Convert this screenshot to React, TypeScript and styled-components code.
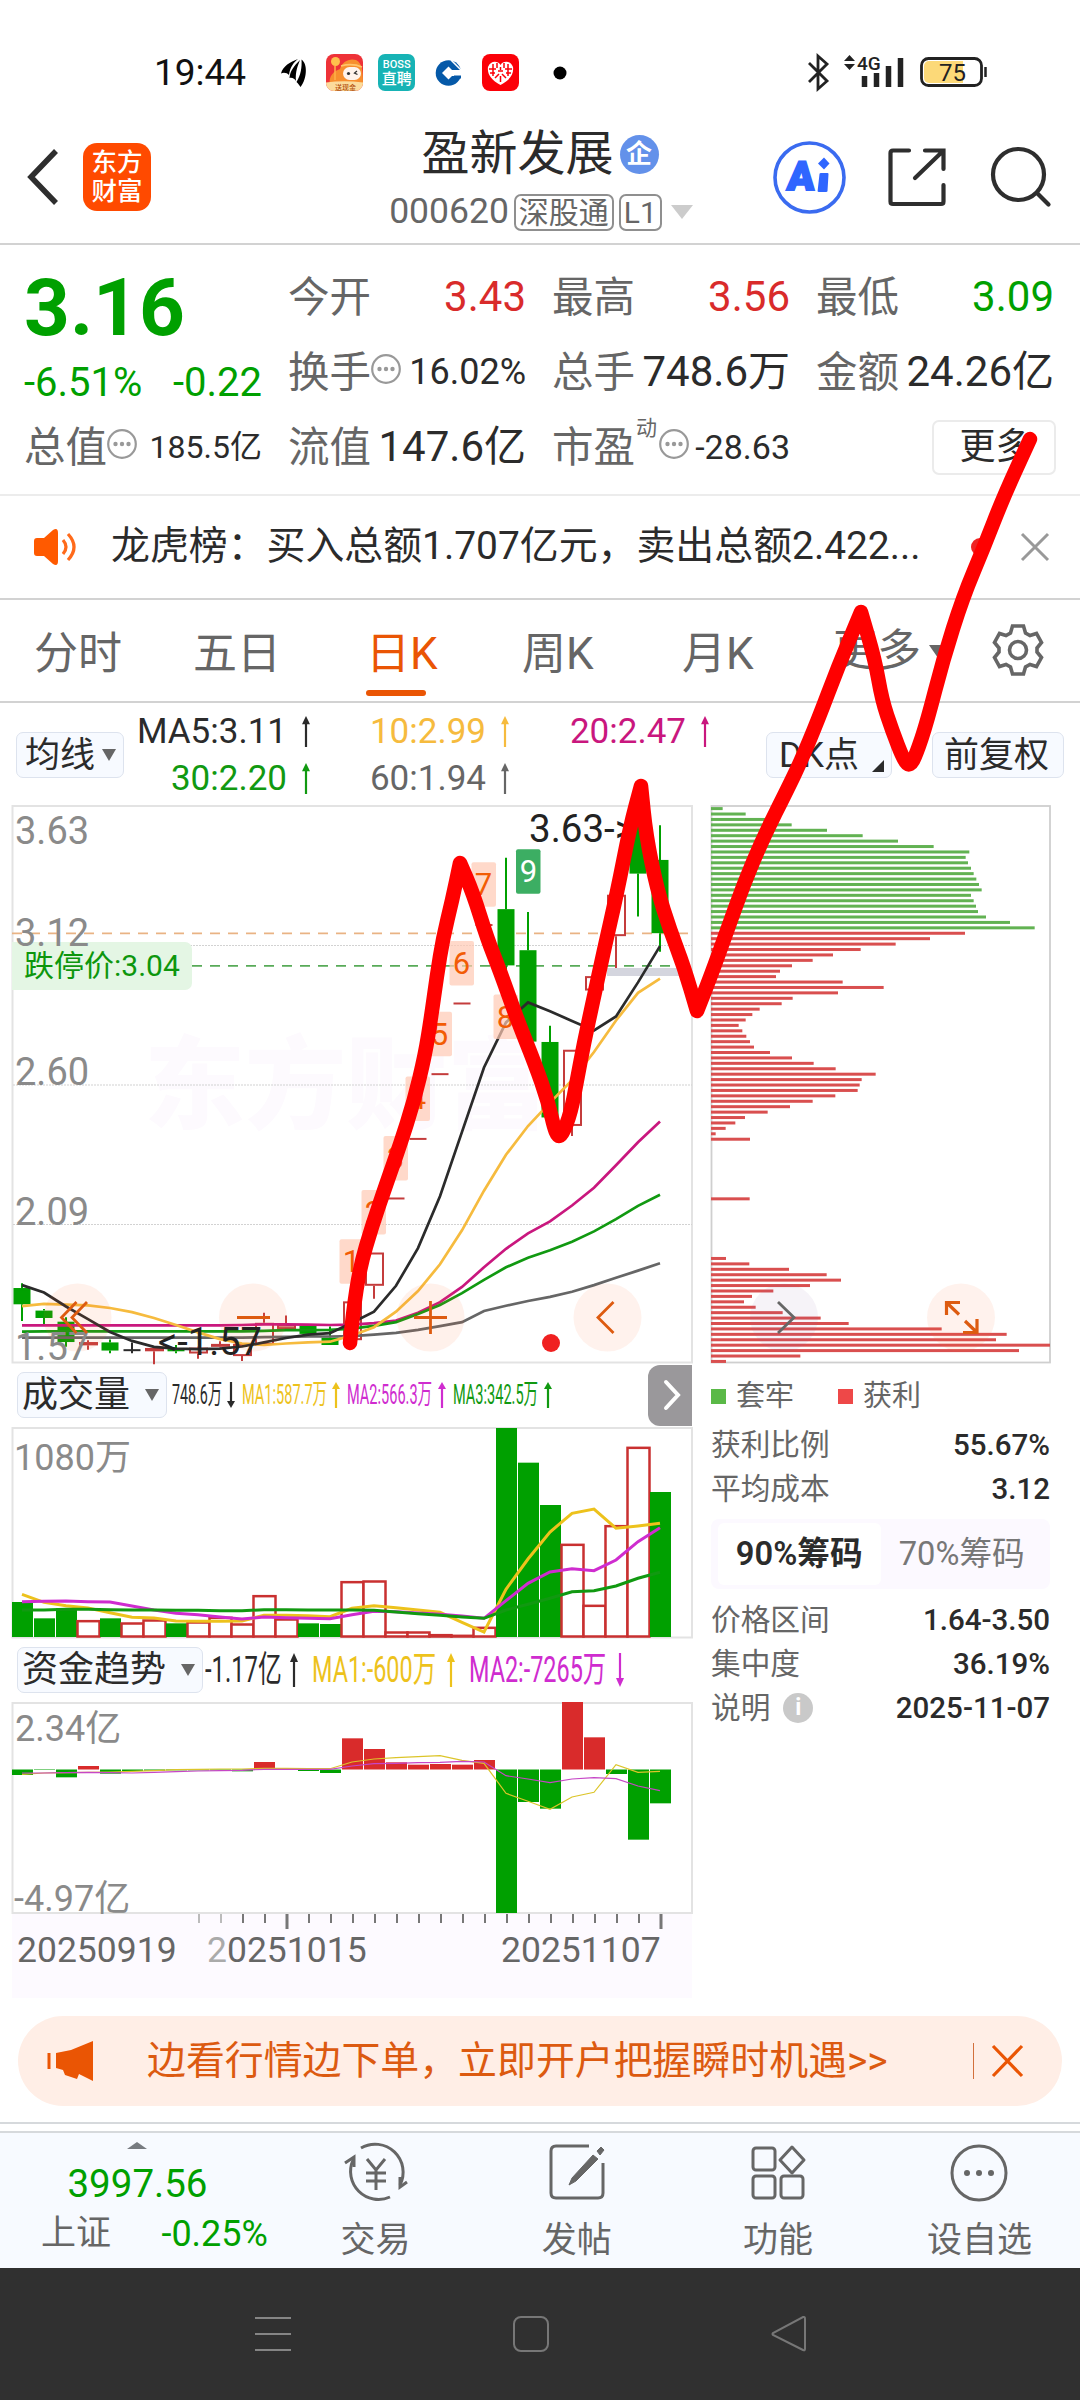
import React from 'react'
import styled, { createGlobalStyle } from 'styled-components'

const GREEN = '#00a000'
const RED = '#d92b2b'
const ORANGE = '#ea5504'

const GlobalStyle = createGlobalStyle`
  * {
    box-sizing: border-box;
  }

  body {
    margin: 0;
    background: #fff;
    font-family: Roboto, 'Noto Sans CJK SC', sans-serif;
    color: #2b2b2b;
  }
`

const Screen = styled.div`
  position: relative;
  display: flex;
  flex-direction: column;
  width: 1080px;
  height: 2400px;
  overflow: hidden;
  background: #fff;
`

/* ---------- shared ---------- */

interface TextProps {
  $size?: number
  $color?: string
  $weight?: number
}

const Text = styled.span<TextProps>`
  font-size: ${({ $size }) => $size || 36}px;
  line-height: ${({ $size }) => $size || 36}px;
  color: ${({ $color }) => $color || '#2b2b2b'};
  font-weight: ${({ $weight }) => $weight || 400};
  white-space: nowrap;
`

const Spacer = styled.div`
  flex: 1;
`

const Svg = styled.svg`
  display: block;
  flex: none;
  overflow: visible;
`

interface ArrowProps {
  color: string
  down?: boolean
  height?: number
}

const Arrow: React.FC<ArrowProps> = ({ color, down, height = 31 }) => (
  <Svg width="10" height={height} viewBox="0 0 10 30" preserveAspectRatio="none">
    <g transform={down ? 'rotate(180 5 15)' : undefined}>
      <path d="M5 3V30" stroke={color} strokeWidth="2.2" />
      <path d="M5 0L9 8H1Z" fill={color} />
    </g>
  </Svg>
)

/* ---------- status bar ---------- */

const StatusBar = styled.div`
  display: flex;
  align-items: center;
  height: 92px;
  padding: 53px 91px 0 154px;
`

const StatusGroup = styled.div`
  display: flex;
  align-items: center;
  height: 39px;
`

const AppIcons = styled(StatusGroup)`
  gap: 15px;
  margin-left: 35px;
`

const BossIcon = styled.div`
  display: flex;
  flex-direction: column;
  align-items: center;
  justify-content: center;
  width: 37px;
  height: 37px;
  border-radius: 7px;
  background: #17b3b5;
  color: #fff;
  font-weight: 500;
`

const BossLatin = styled.span`
  font-size: 11px;
  line-height: 12px;
`

const BossHan = styled.span`
  font-size: 15px;
  line-height: 16px;
`

const PromoIcon = () => (
  <Svg width="37" height="37" viewBox="0 0 37 37">
    <rect width="37" height="37" rx="8" fill="#ee3238" />
    <path d="M4 31C2 22 8 17 14 15C16 8 23 4 30 6c7 3 7 14 7 25z" fill="#f78f2e" />
    <path d="M15 12Q26 9 36 13" stroke="#ffc46b" strokeWidth="1.8" fill="none" />
    <circle cx="9.5" cy="7.500" r="4.500" fill="#ffc04d" />
    <path d="M9 12V26" stroke="#ffb04a" strokeWidth="1.5" />
    <rect x="17" y="13" width="18" height="13" rx="6.500" fill="#fff3ec" />
    <circle cx="22.500" cy="19.500" r="1.600" fill="#333" />
    <path d="M31 17l-2.500 2 3 1.500" stroke="#333" strokeWidth="1.300" fill="none" />
    <path d="M0 28.500Q18 26 37 28.500V29a8 8 0 0 1-8 8H8a8 8 0 0 1-8-8z" fill="#fbdc9c" />
    <text x="9" y="35.500" fontSize="7" fontWeight="500" fill="#b4520f">
      送现金
    </text>
  </Svg>
)

const WingIcon = () => (
  <Svg width="30" height="30" viewBox="0 0 30 30">
    <path d="M17 1C9 4 2 8 0 15.500C3 14 6 15 8 17C9 9 13 4 17 1z" fill="#000" />
    <path d="M19 2C13 8 9 13 8.500 20C11 19 14 21 15 23C14 14 17 7 19 2z" fill="#000" />
    <path d="M20.500 1.500C27 6 26 21 19.500 29C18 27 17 25 15.500 24C20 17 21 9 20.500 1.500z" fill="#000" />
  </Svg>
)

const BankIcon = () => (
  <Svg width="37" height="30" viewBox="0 0 37 30">
    <circle cx="18.500" cy="15" r="12.800" fill="#0559a8" />
    <path d="M18.500 8.500L25 15L18.500 21.500L12 15Z" fill="#fff" />
    <path d="M22 12H33V18H22Z" fill="#fff" />
    <path d="M21 2L31 12" stroke="#fff" strokeWidth="1.600" />
    <path d="M24 19H31" stroke="#0559a8" strokeWidth="3" />
  </Svg>
)

const HeartIcon = () => (
  <Svg width="37" height="37" viewBox="0 0 37 37">
    <rect width="37" height="37" rx="8" fill="#fb0008" />
    <path
      d="M18.500 31C9 26 5 20 6 13C9 6 16 7 18.500 11C21 7 28 6 31 13C32 20 28 26 18.500 31Z"
      fill="#fff"
    />
    <path
      d="M11 10V22M15 9V14M22 9V14M26 10V22M7 15H14M23 15H30M8 19H13M24 19H29M16 17H21M18.500 13V16M13 24L17 20M24 24L20 20M18.500 22V28"
      fill="none"
      stroke="#fb0008"
      strokeWidth="1.500"
    />
  </Svg>
)

const SystemIcons = () => (
  <Svg width="184" height="38" viewBox="806 54 184 38">
    <path
      d="M810 63l18 18-9 8V56l9 8-18 18"
      fill="none"
      stroke="#222"
      strokeWidth="2.800"
    />
    <path d="M850.500 55l5.500 6h-11zM850.500 70l5.500-6h-11z" fill="#222" />
    <text x="858" y="70" fontSize="19" fontWeight="500" fill="#222">
      4G
    </text>
    <path
      d="M865.500 76v11M877.500 73v14M889.500 66v21M901.500 58v29"
      stroke="#222"
      strokeWidth="5.500"
      strokeLinecap="butt"
    />
    <rect x="922.500" y="58.500" width="60" height="27" rx="7" fill="#fff" stroke="#222" strokeWidth="2.800" />
    <path d="M925 66a5 5 0 0 1 5-5h34v22h-34a5 5 0 0 1-5-5z" fill="#fcd978" />
    <path d="M986.500 67v10" stroke="#222" strokeWidth="2.500" />
    <text x="940" y="80.500" fontSize="24" fill="#222">
      75
    </text>
  </Svg>
)

/* ---------- header ---------- */

const Header = styled.div`
  display: grid;
  grid-template-columns: 330px 1fr 330px;
  height: 153px;
  padding-top: 33px;
  border-bottom: 2px solid #d2d2d2;
`

const HeaderSide = styled.div`
  display: flex;
  align-items: center;
  height: 104px;
  padding-left: 26px;
`

const HeaderActions = styled(HeaderSide)`
  justify-content: flex-end;
  padding: 0 28px 0 0;
  gap: 41px;
`

const BrandLogo = styled.div`
  width: 68px;
  height: 68px;
  margin-left: 24px;
  padding-top: 5px;
  border-radius: 14px;
  background: #ff4a00;
  color: #fff;
  font-size: 25.500px;
  font-weight: 500;
  line-height: 28.500px;
  text-align: center;
`

const TitleBlock = styled.div`
  display: flex;
  flex-direction: column;
  align-items: center;
`

const TitleRow = styled.div`
  display: flex;
  align-items: center;
  gap: 6px;
  height: 58px;
`

const CompanyBadge = styled.div`
  width: 39px;
  height: 39px;
  border-radius: 50%;
  background: #6391ea;
  color: #fff;
  font-size: 26px;
  font-weight: 700;
  line-height: 38px;
  text-align: center;
`

const CodeRow = styled.div`
  display: flex;
  align-items: center;
  gap: 5px;
  height: 58px;
  padding-left: 4px;
`

const Tag = styled.span`
  height: 37px;
  padding: 0 3px;
  border: 2px solid #8f8f8f;
  border-radius: 7px;
  font-size: 30px;
  line-height: 33px;
  color: #666;
`

const AiIcon = () => (
  <Svg width="73" height="73" viewBox="0 0 73 73">
    <circle cx="36.500" cy="36.500" r="34.500" fill="#fff" stroke="#3a6bf0" strokeWidth="3.600" />
    <text
      x="17"
      y="49.500"
      fontSize="40"
      fontWeight="900"
      fill="#2f66ff"
      stroke="#2f66ff"
      strokeWidth="2"
      transform="skewX(-4)"
    >
      A
    </text>
    <path d="M46.500 33Q46.500 32 48 32H54.500Q55.500 32 55.500 33L54.500 50Q54.500 51 53 51H46Q44.500 51 44.600 50Z" fill="#2f66ff" />
    <path d="M51 16.500L56.500 22.500L51 28.500L45 22.500Z" fill="#2f66ff" />
  </Svg>
)

const ShareIcon = () => (
  <Svg width="62" height="60" viewBox="0 0 62 60">
    <path
      d="M22 3.500H6Q3.500 3.500 3.500 6V54.500Q3.500 57 6 57H54Q56.500 57 56.500 54.500V38M28 31L55 5M38 3.500H56.500V22"
      fill="none"
      stroke="#2e2e2e"
      strokeWidth="4.200"
      strokeLinecap="round"
    />
  </Svg>
)

const SearchIcon = () => (
  <Svg width="62" height="62" viewBox="0 0 62 62">
    <circle cx="28.500" cy="28.500" r="25.500" fill="none" stroke="#2e2e2e" strokeWidth="4.200" />
    <path d="M47 47L58.500 58.500" stroke="#2e2e2e" strokeWidth="4.200" strokeLinecap="round" />
  </Svg>
)

/* ---------- quote ---------- */

const Quote = styled.div`
  display: grid;
  grid-template-columns: repeat(4, 238px);
  grid-template-rows: repeat(3, 75px);
  column-gap: 26px;
  height: 249px;
  padding: 15px 25px 0 24px;
`

const PriceCell = styled.div`
  grid-row: span 2;
  display: flex;
  flex-direction: column;
  padding-top: 8px;
`

const ChangeRow = styled.div`
  display: flex;
  justify-content: space-between;
  margin-top: 15px;
`

const QuoteCell = styled.div`
  display: flex;
  align-items: center;
`

const MoreCell = styled(QuoteCell)`
  justify-content: flex-end;
`

const MoreButton = styled.div`
  width: 124px;
  height: 55px;
  margin-right: -2px;
  padding-left: 3px;
  border: 2px solid #ebebeb;
  border-radius: 7px;
  font-size: 36px;
  line-height: 50px;
  text-align: center;
`

const Sup = styled.span`
  align-self: flex-start;
  margin: 4px 2px 0 1px;
  font-size: 21px;
  line-height: 28px;
  color: #666;
`

const Dots = () => (
  <Svg width="30" height="36" viewBox="0 0 30 36">
    <circle cx="15" cy="15" r="13.800" fill="none" stroke="#999" strokeWidth="2.200" />
    <g fill="#999">
      <circle cx="8.500" cy="15" r="2.200" />
      <circle cx="15" cy="15" r="2.200" />
      <circle cx="21.500" cy="15" r="2.200" />
    </g>
  </Svg>
)

interface QuoteItemProps {
  label: string
  value: string
  color?: string
  size?: number
  info?: boolean
  sup?: string
}

const QuoteItem: React.FC<QuoteItemProps> = ({ label, value, color, size = 42, info, sup }) => (
  <QuoteCell>
    <Text $size={41.5} $color="#666">
      {label}
    </Text>
    {sup ? <Sup>{sup}</Sup> : null}
    {info ? <Dots /> : null}
    <Spacer />
    <Text $size={size} $color={color}>
      {value}
    </Text>
  </QuoteCell>
)

/* ---------- notice + tabs ---------- */

const Notice = styled.div`
  display: flex;
  align-items: center;
  height: 106px;
  padding: 0 30px 0 34px;
  border-top: 2px solid #ececec;
  border-bottom: 2px solid #d2d2d2;
`

const NoticeText = styled(Text)`
  margin-left: 32px;
`

const Dot = styled.div`
  width: 18px;
  height: 18px;
  margin-right: 31px;
  border-radius: 50%;
  background: #ee2222;
`

const Tabs = styled.div`
  display: flex;
  align-items: center;
  height: 104px;
  padding: 0 37px 0 34px;
  border-bottom: 2px solid #d2d2d2;
`

interface TabProps {
  $width: number
  $active?: boolean
}

const Tab = styled.div<TabProps>`
  display: flex;
  flex-direction: column;
  width: ${({ $width }) => $width}px;
  height: 100%;
  padding-top: 32px;
  font-size: 44px;
  line-height: 44px;
  color: ${({ $active }) => ($active ? ORANGE : '#666')};

  &:after {
    content: '';
    width: 60px;
    height: 6px;
    margin-top: 14px;
    border-radius: 3px;
    background: ${({ $active }) => ($active ? ORANGE : 'transparent')};
  }
`

const MoreTab = styled.div`
  display: flex;
  align-items: center;
  gap: 8px;
  padding-top: 2px;
  font-size: 44px;
  line-height: 44px;
  color: #666;
`

/* ---------- chart tools ---------- */

const Tools = styled.div`
  display: flex;
  align-items: center;
  height: 102px;
  padding: 2px 16px 0;
`

const Chip = styled.div<{ $width: number; $pad?: number }>`
  display: flex;
  align-items: center;
  justify-content: space-between;
  width: ${({ $width }) => $width}px;
  height: 46px;
  padding: 0 7px 0 ${({ $pad }) => $pad || 4}px;
  border: 1px solid #dde3ee;
  border-radius: 7px;
  background: #f7faff;
  flex: none;
`

const Averages = styled.div`
  display: grid;
  grid-template-columns: 187px 199px 200px;
  grid-template-rows: 47px 47px;
  justify-items: end;
`

const AverageItem = styled.div`
  display: flex;
  align-items: center;
  gap: 14px;
`

const ToolButtons = styled.div`
  display: flex;
  gap: 40px;
`

const Caret = styled.div<{ $w?: number; $h?: number; $color?: string }>`
  border-left: ${({ $w }) => $w || 7.5}px solid transparent;
  border-right: ${({ $w }) => $w || 7.5}px solid transparent;
  border-top: ${({ $h }) => $h || 12}px solid ${({ $color }) => $color || '#666'};
`

const CaretUp = styled.div`
  border-left: 10px solid transparent;
  border-right: 10px solid transparent;
  border-bottom: 7px solid #777b80;
`

const Corner = styled.div`
  align-self: flex-end;
  margin-bottom: 5px;
  border-left: 12px solid transparent;
  border-bottom: 12px solid #2b2b2b;
`

/* ---------- charts ---------- */

const Body = styled.div`
  display: flex;
  height: 1193px;
  padding-left: 12px;
`

const ChartColumn = styled.div`
  width: 680px;
`

const ChipColumn = styled.div`
  width: 339px;
  margin-left: 19px;
`

const IndicatorRow = styled.div`
  display: flex;
  align-items: center;
  height: 64px;
  padding-left: 5px;
`

const Readings = styled.div<{ $gap: number; $left: number }>`
  display: flex;
  align-items: center;
  gap: ${({ $gap }) => $gap}px;
  margin-left: ${({ $left }) => $left}px;
`

const Reading = styled.div<{ $width: number }>`
  display: flex;
  align-items: center;
  justify-content: space-between;
  width: ${({ $width }) => $width}px;
`

const Narrow = styled(Text)<{ $scale: number; $room: number }>`
  width: ${({ $room }) => $room}px;
  transform: scaleX(${({ $scale }) => $scale});
  transform-origin: 0 50%;
`

const NextButton = styled.div`
  display: flex;
  align-items: center;
  justify-content: center;
  width: 44px;
  height: 61px;
  padding-left: 4px;
  border-radius: 12px 0 0 12px;
  background: #9a989b;
`

const Axis = styled.div`
  height: 84px;
  background: #fdfaff;
`

const center = (i: number) => 10 + i * 22
const toPoints = (values: number[], y: (v: number) => number) =>
  values.map((v, i) => `${center(i)},${y(v).toFixed(1)}`).join(' ')

// [kind, body top, body bottom, wick top, wick bottom]
type Candle = ['g' | 'r' | 'k', number, number, number, number]

const candles: Candle[] = [
  ['g', 1346, 1390, 1333, 1435],
  ['g', 1407, 1427, 1403, 1445],
  ['g', 1437, 1492, 1425, 1505],
  ['r', 1492, 1501, 1487, 1513],
  ['g', 1493, 1515, 1485, 1522],
  ['k', 1514, 1516, 1493, 1522],
  ['r', 1508, 1517, 1508, 1552],
  ['g', 1511, 1517, 1500, 1522],
  ['r', 1507, 1523, 1505, 1537],
  ['r', 1497, 1505, 1490, 1507],
  ['r', 1497, 1530, 1497, 1543],
  ['r', 1440, 1500, 1413, 1500],
  ['r', 1445, 1457, 1420, 1457],
  ['g', 1447, 1470, 1447, 1470],
  ['g', 1480, 1500, 1450, 1500],
  ['r', 1382, 1487, 1382, 1487],
  ['r', 1250, 1340, 1250, 1375],
  ['r', 1104, 1104, 1104, 1104],
  ['r', 943, 943, 943, 943],
  ['r', 768, 768, 768, 768],
  ['r', 577, 577, 577, 577],
  ['r', 365, 365, 365, 365],
  ['g', 322, 474, 183, 503],
  ['g', 433, 680, 330, 695],
  ['g', 681, 885, 637, 885],
  ['r', 702, 908, 702, 935],
  ['r', 503, 542, 503, 542],
  ['r', 283, 395, 283, 481],
  ['g', 80, 226, 60, 342],
  ['g', 189, 387, 95, 437],
]

const priceLines: [string, number[]][] = [
  ['#666', [1480, 1480, 1480, 1480, 1480, 1480, 1480, 1480, 1480, 1480, 1480, 1479, 1478, 1477, 1477, 1476, 1472, 1467, 1459, 1449, 1438, 1408, 1394, 1381, 1370, 1356, 1338, 1318, 1299, 1279]],
  ['#c9177e', [1447, 1447, 1447, 1447, 1447, 1447, 1447, 1447, 1447, 1447, 1446, 1444, 1444, 1445, 1446, 1445, 1441, 1434, 1413, 1384, 1343, 1290, 1240, 1198, 1166, 1123, 1075, 1014, 952, 896]],
  ['#119911', [1464, 1463, 1463, 1463, 1463, 1463, 1463, 1463, 1463, 1463, 1463, 1462, 1460, 1460, 1459, 1456, 1448, 1438, 1416, 1392, 1360, 1324, 1290, 1264, 1244, 1221, 1193, 1160, 1124, 1094]],
  ['#f6bb3e', [1395, 1389, 1391, 1393, 1400, 1411, 1427, 1446, 1466, 1484, 1496, 1500, 1496, 1493, 1491, 1474, 1452, 1410, 1354, 1282, 1190, 1083, 986, 908, 845, 784, 708, 623, 548, 510]],
  ['#2b2b2b', [1338, 1358, 1396, 1430, 1465, 1489, 1505, 1510, 1511, 1510, 1504, 1493, 1481, 1472, 1468, 1440, 1410, 1340, 1238, 1098, 924, 750, 628, 574, 598, 624, 650, 612, 520, 422]],
]

const badges: [string, number, number][] = [
  ['1', 328, 1214],
  ['2', 350, 1081],
  ['3', 372, 935],
  ['4', 394, 774],
  ['5', 416, 599],
  ['6', 438, 408],
  ['7', 460, 195],
  ['8', 482, 553],
]

const py = (v: number) => v * 0.37 - 15

const PriceChart = () => (
  <Svg width="681" height="558" viewBox="0 0 681 558">
    <text x="132" y="316" fontSize="101" fontWeight="900" fill="#fdfafe">
      东方财富
    </text>
    <rect x="0.500" y="1" width="679.500" height="556.500" fill="none" stroke="#e3e3e3" strokeWidth="2" />
    <path d="M1 140.500H680M1 280H680M1 419.500H680" stroke="#d2d2d2" strokeWidth="1.200" strokeDasharray="2 1" />
    <path d="M0 128.300H676" stroke="#e9b384" strokeWidth="1.800" strokeDasharray="10 8" />
    <path d="M180 160.800H676" stroke="#58aa58" strokeWidth="1.800" strokeDasharray="10 8" />
    <rect x="595" y="163" width="85" height="8" fill="#d4d5de" />
    <path d="M0 137H173a7 7 0 0 1 7 7V178a7 7 0 0 1-7 7H0Z" fill="#e4f6e4" />
    <g fontSize="38" fill="#8a8a8a">
      <text x="3" y="39">3.63</text>
      <text x="3" y="140.500">3.12</text>
      <text x="3" y="280">2.60</text>
      <text x="3" y="420">2.09</text>
    </g>
    <text x="12" y="171" fontSize="30" fill="#0d960d">
      跌停价:3.04
    </text>
    {candles.map(([kind, top, bottom, high, low], i) => {
      const x = center(i)
      const color = kind === 'g' ? GREEN : kind === 'r' ? '#c43c3c' : '#2b2b2b'
      const flat = bottom - top < 4
      return (
        <g key={i} stroke={color} strokeWidth="2">
          <path d={`M${x} ${py(high)}V${py(top)}M${x} ${py(bottom)}V${py(low)}`} />
          {flat ? (
            <path d={`M${x - 8.5} ${py(top)}H${x + 8.5}`} />
          ) : (
            <rect
              x={x - (kind === 'g' ? 7.5 : 8)}
              y={py(top) + 1}
              width={kind === 'g' ? 15 : 17}
              height={py(bottom) - py(top) - 2}
              fill={kind === 'g' ? GREEN : '#fff'}
            />
          )}
        </g>
      )
    })}
    {priceLines.map(([color, values]) => (
      <polyline key={color} points={toPoints(values, py)} fill="none" stroke={color} strokeWidth="2.700" />
    ))}
    {badges.map(([label, x, top]) => (
      <g key={label}>
        <rect x={x - 0.5} y={py(top)} width="24.500" height="44.500" rx="2" fill="#ffc9b3" opacity="0.700" />
        <text x={x + 11.5} y={py(top) + 33} fontSize="31" textAnchor="middle" fill="#f25c05">
          {label}
        </text>
      </g>
    ))}
    <rect x="504" y={py(160)} width="24.500" height="44.500" rx="2" fill="#3cae63" />
    <text x="516.500" y={py(160) + 33} fontSize="31" textAnchor="middle" fill="#fff">
      9
    </text>
    <text x="517" y="36.500" fontSize="38.500" fill="#222">
      3.63-&gt;
    </text>
    <g fill="#ff6a33" opacity="0.090">
      <circle cx="65.500" cy="512.500" r="34" />
      <circle cx="241" cy="512.500" r="34" />
      <circle cx="418.500" cy="512.500" r="34" />
      <circle cx="595.500" cy="512.500" r="34" />
    </g>
    <text x="3" y="555" fontSize="38" fill="#8a8a8a">
      1.57
    </text>
    <text x="146" y="549.500" fontSize="38" fill="#222">
      &lt;-1.57
    </text>
    <path
      d="M64.500 497L49.500 512.500L64.500 528M75 497L60 512.500L75 528M225 512.500H258M402 512.500H435M418.500 496V529M601.500 497L586 512.500L601.500 528"
      fill="none"
      stroke="#dd5b10"
      strokeWidth="2.800"
    />
    <circle cx="539" cy="538" r="9" fill="#f02020" />
  </Svg>
)

const volumes: [string, number][] = [
  ['g', 726], ['g', 775], ['g', 745], ['r', 782], ['g', 775], ['r', 789],
  ['r', 780], ['g', 790], ['r', 786], ['r', 772], ['r', 792], ['r', 707],
  ['r', 777], ['g', 790], ['g', 792], ['r', 665], ['r', 663], ['r', 816],
  ['r', 816], ['r', 824], ['r', 826], ['r', 802], ['g', 204], ['g', 308],
  ['g', 435], ['r', 553], ['r', 736], ['r', 497], ['r', 262], ['g', 396],
]

const volumeLines: [string, number[]][] = [
  ['#edc21c', [703, 727, 737, 744, 758, 772, 774, 783, 784, 784, 783, 766, 766, 767, 770, 745, 737, 743, 750, 757, 787, 816, 688, 597, 516, 460, 447, 505, 498, 490]],
  ['#cf2ccf', [725, 724, 723, 725, 726, 738, 750, 760, 764, 771, 777, 771, 773, 775, 776, 764, 754, 755, 759, 763, 768, 775, 722, 670, 636, 626, 632, 600, 545, 503]],
  ['#119911', [750, 750, 748, 748, 749, 750, 750, 751, 751, 752, 752, 749, 749, 750, 750, 750, 751, 756, 761, 766, 771, 775, 750, 733, 715, 695, 692, 678, 655, 637]],
]

const vy = (v: number) => v / 3 - 67

const VolumeChart = () => (
  <Svg width="681" height="211" viewBox="0 0 681 211">
    <rect x="0.500" y="1" width="679.500" height="209.500" fill="none" stroke="#e3e3e3" strokeWidth="2" />
    <text x="2" y="43" fontSize="36" fill="#8a8a8a">
      1080万
    </text>
    {volumes.map(([kind, top], i) =>
      kind === 'g' ? (
        <rect key={i} x={i * 22} y={vy(top)} width="21" height={210 - vy(top)} fill={GREEN} />
      ) : (
        <rect
          key={i}
          x={i * 22 - 0.5}
          y={vy(top) + 0.5}
          width="22"
          height={209 - vy(top)}
          fill="#fff"
          stroke="#c93030"
          strokeWidth="2.500"
        />
      )
    )}
    {volumeLines.map(([color, values]) => (
      <polyline key={color} points={toPoints(values, vy)} fill="none" stroke={color} strokeWidth="3" />
    ))}
  </Svg>
)

const flows = [
  405, 390, 412, 378, 401, 393, 392, 391, 391, 391, 394, 366, 386, 393, 399,
  295, 327, 367, 374, 372, 374, 360, 819, 486, 506, 186, 292, 402, 599, 490,
]

const flowLines: [string, number[]][] = [
  ['#dcc52a', [403, 399, 398, 397, 396, 394, 392, 389, 388, 387, 387, 385, 385, 386, 386, 366, 357, 353, 350, 347, 361, 370, 460, 484, 508, 471, 457, 374, 397, 394]],
  ['#c646c6', [399, 399, 398, 397, 398, 399, 397, 395, 393, 392, 391, 388, 388, 388, 388, 378, 371, 370, 368, 367, 364, 366, 407, 417, 428, 417, 413, 416, 438, 452]],
]

const fy = (v: number) => v / 3 - 62
const FLOW_ZERO = 388.5

const FlowChart = () => (
  <Svg width="681" height="212" viewBox="0 0 681 212">
    <rect x="0.500" y="1" width="679.500" height="210" fill="none" stroke="#e3e3e3" strokeWidth="2" />
    <text x="3" y="39" fontSize="36" fill="#8a8a8a">
      2.34亿
    </text>
    <text x="2" y="209" fontSize="36" fill="#8a8a8a">
      -4.97亿
    </text>
    {flows.map((v, i) => (
      <rect
        key={i}
        x={i * 22}
        y={fy(Math.min(v, FLOW_ZERO))}
        width="21"
        height={Math.abs(v - FLOW_ZERO) / 3}
        fill={v < FLOW_ZERO ? RED : GREEN}
      />
    ))}
    {flowLines.map(([color, values]) => (
      <polyline key={color} points={toPoints(values, fy)} fill="none" stroke={color} strokeWidth="1.200" />
    ))}
  </Svg>
)

const ticks = Array.from({ length: 22 }, (_, i) => 187 + i * 22)

const TimeAxis = () => (
  <Axis>
    <Svg width="680" height="84" viewBox="0 0 680 84">
      {ticks.map((x, i) => {
        const major = i === 4 || i === 21
        return (
          <path
            key={x}
            d={`M${x} 0V${major ? 15 : 9}`}
            stroke={i < 2 ? '#bbb' : '#777'}
            strokeWidth={major ? 3 : 2}
          />
        )
      })}
      <g fontSize="35.500" fill="#666">
        <text x="5" y="48">20250919</text>
        <text x="195" y="48">
          <tspan fill="#aaa">2</tspan>0251015
        </text>
        <text x="489" y="48">20251107</text>
      </g>
    </Svg>
  </Axis>
)

/* ---------- holdings distribution ---------- */

const chipWidths: number[] = [
  98, 167, 240, 305, 411, 518, 624, 731, 838, 827, 834, 843, 851, 859, 867,
  875, 843, 851, 858, 864, 888, 960, 1034, 825, 720, 617, 512, 429, 368, 306,
  270, 258, 458, 581, 444, 308, 275, 209, 187, 167, 146, 157, 169, 180, 192,
  240, 306, 371, 437, 557, 515, 509, 503, 436, 368, 300, 233, 165, 136, 107,
  77, 180, 0, 0, 0, 0, 0, 0, 0, 0, 0, 0, 179, 0, 0, 0, 0, 0, 0, 0, 0, 0, 0,
  108, 178, 297, 410, 453, 360, 250, 186, 162, 197, 278, 392, 476, 755, 950,
  918, 1080, 987, 331, 108,
]

const ChipChart = () => (
  <Svg width="340" height="558" viewBox="0 0 340 558">
    <rect x="0.500" y="1" width="338.500" height="556.500" fill="none" stroke="#cfcfcf" strokeWidth="1.800" />
    {chipWidths.map((w, i) =>
      w ? (
        <rect
          key={i}
          x="0"
          y={2.1 + i * 5.42}
          width={(w - 63) / 3}
          height="3"
          fill={i < 23 ? '#62b252' : '#d94f4f'}
        />
      ) : null
    )}
    <circle cx="73" cy="512.500" r="34" fill="#8a60a8" opacity="0.080" />
    <circle cx="250" cy="512.500" r="34" fill="#ff6a33" opacity="0.090" />
    <path d="M67 497L83 512.500L67 528" fill="none" stroke="#666" strokeWidth="2.800" />
    <path
      d="M235.500 510V497.500H249M235.500 497.500L248 509.500M254 516L266 527.500M252 527.500H266V514"
      fill="none"
      stroke="#dd5b10"
      strokeWidth="3.200"
    />
  </Svg>
)

const Legend = styled.div`
  display: flex;
  align-items: center;
  height: 60px;
  padding-top: 6px;
`

const Square = styled.div<{ $color: string }>`
  width: 15px;
  height: 15px;
  margin-right: 10px;
  background: ${({ $color }) => $color};
`

const LegendGap = styled.div`
  width: 44px;
`

const StatRow = styled.div`
  display: flex;
  align-items: center;
  height: 44px;
`

const InfoMark = styled.div`
  width: 30px;
  height: 30px;
  margin-left: 13px;
  border-radius: 50%;
  background: #c9c9c9;
  color: #fff;
  font-size: 23px;
  font-weight: 700;
  line-height: 30px;
  text-align: center;
`

const Toggle = styled.div`
  display: flex;
  height: 70px;
  margin: 8px 0 9px;
  padding: 4px 7px;
  border-radius: 8px;
  background: #fcf9ff;
`

const ToggleItem = styled.div<{ $active?: boolean }>`
  flex: 1;
  border-radius: 6px;
  background: ${({ $active }) => ($active ? '#fff' : 'transparent')};
  color: ${({ $active }) => ($active ? '#2b2b2b' : '#777')};
  font-size: 32.700px;
  font-weight: ${({ $active }) => ($active ? 600 : 400)};
  line-height: 62px;
  text-align: center;
  white-space: nowrap;
`

interface StatProps {
  label: string
  value: string
  info?: boolean
}

const Stat: React.FC<StatProps> = ({ label, value, info }) => (
  <StatRow>
    <Text $size={29.7} $color="#666">
      {label}
    </Text>
    {info ? <InfoMark>i</InfoMark> : null}
    <Spacer />
    <Text $size={29.5} $weight={500}>
      {value}
    </Text>
  </StatRow>
)

/* ---------- banner + bottom bars ---------- */

const Banner = styled.div`
  display: flex;
  align-items: center;
  height: 90px;
  margin: 18px 18px 0;
  padding: 0 38px 0 29px;
  border-radius: 45px;
  background: #ffeee6;
`

const BannerText = styled(Text)`
  margin-left: 53px;
`

const BannerDivider = styled.div`
  width: 1px;
  height: 36px;
  margin-right: 17px;
  background: #d2703c;
`

const Divider = styled.div`
  height: 11px;
  margin-top: 16px;
  border-top: 2px solid #d6d9dc;
  border-bottom: 2px solid #d6d9dc;
`

const BottomNav = styled.div`
  display: flex;
  height: 135px;
  background: #f7faff;
`

const IndexBox = styled.div`
  display: flex;
  flex-direction: column;
  align-items: center;
  width: 275px;
  padding: 9px 0 0;
`

const IndexValue = styled(Text)`
  margin-top: 16px;
`

const IndexRow = styled.div`
  display: flex;
  justify-content: space-between;
  align-self: stretch;
  margin: 12px 7px 0 41px;
`

const NavItem = styled.div`
  display: flex;
  flex-direction: column;
  align-items: center;
  justify-content: space-between;
  width: 201.300px;
  padding: 10px 0;
`

const SystemNav = styled.div`
  display: flex;
  height: 132px;
  padding: 48px 0 0 255px;
  gap: 222px;
  background: #303030;
`

const navItems = [
  {
    label: '交易',
    icon: (
      <g>
        <path d="M15 5A28 28 0 0 1 54 42M44 54A28 28 0 0 1 7 17" />
        <path d="M-1 20L8 14V24M61 39L54 44V34" />
        <path d="M21 16L30 27L39 16M20 30H40M20 38H40M30 27V47" />
      </g>
    ),
  },
  {
    label: '发帖',
    icon: (
      <g>
        <path d="M42 3H9Q4 3 4 8V50Q4 55 9 55H51Q56 55 56 50V20" />
        <path d="M46 12L51 16L29 38L22 42L25 35Z" fill="#666" strokeWidth="1" />
        <path d="M50 8L54 4L57 7L53 12Z" fill="#666" strokeWidth="1" />
      </g>
    ),
  },
  {
    label: '功能',
    icon: (
      <g>
        <rect x="5" y="5" width="22" height="22" rx="3" />
        <rect x="5" y="33" width="22" height="22" rx="3" />
        <rect x="33" y="33" width="22" height="22" rx="3" />
        <path d="M44 4L56 17L44 30L32 17Z" strokeLinejoin="round" />
      </g>
    ),
  },
  {
    label: '设自选',
    icon: (
      <g>
        <circle cx="30" cy="30" r="27" />
        <g fill="#666" stroke="none">
          <circle cx="18" cy="30" r="3" />
          <circle cx="30" cy="30" r="3" />
          <circle cx="42" cy="30" r="3" />
        </g>
      </g>
    ),
  },
]

/* ---------- hand drawn trend ---------- */

const Scribble = styled.svg`
  position: absolute;
  top: 0;
  left: 0;
  pointer-events: none;
`

// a point given twice keeps its corner
const trendPoints: [number, number][] = [
  [350, 1343], [353, 1312], [360, 1267], [372, 1226], [387, 1182], [400, 1145],
  [414, 1101], [425, 1055], [431, 1018], [437, 975], [443, 938], [452, 901],
  [460, 863], [460, 863], [473, 893], [487, 938], [500, 971], [517, 1019],
  [535, 1064], [548, 1101], [556, 1136], [562, 1136], [571, 1112], [577, 1080],
  [584, 1043], [593, 1001], [604, 950], [617, 893], [630, 827], [641, 786],
  [641, 786], [646, 835], [657, 889], [670, 930], [684, 967], [697, 1011],
  [697, 1011], [710, 978], [727, 931], [743, 886], [763, 838], [788, 788],
  [800, 763], [818, 720], [838, 667], [861, 612], [861, 612], [875, 660],
  [882, 700], [892, 730], [904, 761], [910, 766], [916, 755], [927, 722],
  [943, 660], [963, 597], [984, 547], [1003, 498], [1030, 439],
]

const smooth = (points: [number, number][]) => {
  const parts = points.slice(1, -1).map(([x, y], i) => {
    const [nx, ny] = points[i + 2]
    return `Q${x} ${y} ${(x + nx) / 2} ${(y + ny) / 2}`
  })
  return `M${points[0].join(' ')}${parts.join('')}L${points[points.length - 1].join(' ')}`
}

const App: React.FC = () => (
  <Screen>
    <GlobalStyle />
    <StatusBar>
      <Text $size={37} $color="#111">
        19:44
      </Text>
      <AppIcons>
        <WingIcon />
        <PromoIcon />
        <BossIcon>
          <BossLatin>BOSS</BossLatin>
          <BossHan>直聘</BossHan>
        </BossIcon>
        <BankIcon />
        <HeartIcon />
        <Svg width="60" height="14" viewBox="0 0 60 14">
          <circle cx="26" cy="7" r="6.500" fill="#000" />
        </Svg>
      </AppIcons>
      <Spacer />
      <SystemIcons />
    </StatusBar>

    <Header>
      <HeaderSide>
        <Svg width="33" height="58" viewBox="0 0 33 58">
          <path d="M30 3L5 29L30 55" fill="none" stroke="#2e2e2e" strokeWidth="5.500" />
        </Svg>
        <BrandLogo>
          东方
          <br />
          财富
        </BrandLogo>
      </HeaderSide>
      <TitleBlock>
        <TitleRow>
          <Text $size={48}>盈新发展</Text>
          <CompanyBadge>企</CompanyBadge>
        </TitleRow>
        <CodeRow>
          <Text $size={35.5} $color="#666">
            000620
          </Text>
          <Tag>深股通</Tag>
          <Tag>L1</Tag>
          <Svg width="28" height="14" viewBox="0 0 28 14">
            <path d="M4 0H26L15 14Z" fill="#ccc" />
          </Svg>
        </CodeRow>
      </TitleBlock>
      <HeaderActions>
        <AiIcon />
        <ShareIcon />
        <SearchIcon />
      </HeaderActions>
    </Header>

    <Quote>
      <PriceCell>
        <Text $size={80} $weight={700} $color={GREEN}>
          3.16
        </Text>
        <ChangeRow>
          <Text $size={40} $color={GREEN}>
            -6.51%
          </Text>
          <Text $size={40} $color={GREEN}>
            -0.22
          </Text>
        </ChangeRow>
      </PriceCell>
      <QuoteItem label="今开" value="3.43" color={RED} />
      <QuoteItem label="最高" value="3.56" color={RED} />
      <QuoteItem label="最低" value="3.09" color={GREEN} />
      <QuoteItem label="换手" value="16.02%" size={36} info />
      <QuoteItem label="总手" value="748.6万" />
      <QuoteItem label="金额" value="24.26亿" />
      <QuoteItem label="总值" value="185.5亿" size={32} info />
      <QuoteItem label="流值" value="147.6亿" />
      <QuoteItem label="市盈" value="-28.63" size={34} info sup="动" />
      <MoreCell>
        <MoreButton>更多</MoreButton>
      </MoreCell>
    </Quote>

    <Notice>
      <Svg width="45" height="36" viewBox="0 0 45 36">
        <path d="M0 12Q0 9 3 9H10L19 1Q24-2 24 4V32Q24 38 19 35L10 27H3Q0 27 0 24Z" fill="#ff5a00" />
        <path d="M29 11Q35 18 29 25M34 5Q46 18 34 31" fill="none" stroke="#ff6a1a" strokeWidth="3.200" />
      </Svg>
      <NoticeText $size={38.9}>龙虎榜：买入总额1.707亿元，卖出总额2.422...</NoticeText>
      <Spacer />
      <Dot />
      <Svg width="30" height="30" viewBox="0 0 30 30">
        <path d="M2 2L28 28M28 2L2 28" stroke="#999" strokeWidth="3" />
      </Svg>
    </Notice>

    <Tabs>
      <Tab $width={159}>分时</Tab>
      <Tab $width={173}>五日</Tab>
      <Tab $width={156} $active>
        日K
      </Tab>
      <Tab $width={160}>周K</Tab>
      <Tab $width={151}>月K</Tab>
      <MoreTab>
        更多
        <Caret $w={9} $h={13} />
      </MoreTab>
      <Spacer />
      <Svg width="50" height="52" viewBox="0 0 50 52">
        <path
          d="M19.500 2H30.500L32.500 9L37 11.500L43.500 9.500L48.500 18.500L44 24V28L48.500 33.500L43.500 42.500L37 40.500L32.500 43L30.500 50H19.500L17.500 43L13 40.500L6.500 42.500L1.500 33.500L6 28V24L1.500 18.500L6.500 9.500L13 11.500L17.500 9Z"
          fill="none"
          stroke="#666"
          strokeWidth="3.600"
        />
        <circle cx="25" cy="26" r="8.500" fill="none" stroke="#666" strokeWidth="3.600" />
      </Svg>
    </Tabs>

    <Tools>
      <Chip $width={108} $pad={8}>
        <Text $size={35}>均线</Text>
        <Caret />
      </Chip>
      <Averages>
        <AverageItem>
          <Text $size={35}>MA5:3.11</Text>
          <Arrow color="#2b2b2b" />
        </AverageItem>
        <AverageItem>
          <Text $size={35} $color="#f6bb3e">
            10:2.99
          </Text>
          <Arrow color="#f6bb3e" />
        </AverageItem>
        <AverageItem>
          <Text $size={35} $color="#c9177e">
            20:2.47
          </Text>
          <Arrow color="#c9177e" />
        </AverageItem>
        <AverageItem>
          <Text $size={35} $color="#119911">
            30:2.20
          </Text>
          <Arrow color="#119911" />
        </AverageItem>
        <AverageItem>
          <Text $size={35} $color="#666">
            60:1.94
          </Text>
          <Arrow color="#666" />
        </AverageItem>
      </Averages>
      <Spacer />
      <ToolButtons>
        <Chip $width={126} $pad={12}>
          <Text $size={35}>DK点</Text>
          <Corner />
        </Chip>
        <Chip $width={132} $pad={11}>
          <Text $size={35}>前复权</Text>
        </Chip>
      </ToolButtons>
    </Tools>

    <Body>
      <ChartColumn>
        <PriceChart />
        <IndicatorRow>
          <Chip $width={150}>
            <Text $size={36}>成交量</Text>
            <Caret />
          </Chip>
          <Readings $gap={6} $left={5}>
            <Reading $width={64}>
              <Narrow $size={28} $scale={0.51} $room={50}>
                748.6万
              </Narrow>
              <Arrow color="#2b2b2b" down height={26} />
            </Reading>
            <Reading $width={99}>
              <Narrow $size={28} $scale={0.52} $room={85} $color="#edc21c">
                MA1:587.7万
              </Narrow>
              <Arrow color="#edc21c" height={26} />
            </Reading>
            <Reading $width={100}>
              <Narrow $size={28} $scale={0.52} $room={85} $color="#cf2ccf">
                MA2:566.3万
              </Narrow>
              <Arrow color="#cf2ccf" height={26} />
            </Reading>
            <Reading $width={100}>
              <Narrow $size={28} $scale={0.52} $room={85} $color="#119911">
                MA3:342.5万
              </Narrow>
              <Arrow color="#119911" height={26} />
            </Reading>
          </Readings>
          <Spacer />
          <NextButton>
            <Svg width="20" height="32" viewBox="0 0 20 32">
              <path d="M4 3L16 16L4 29" fill="none" stroke="#fff" strokeWidth="4" strokeLinecap="round" />
            </Svg>
          </NextButton>
        </IndicatorRow>
        <VolumeChart />
        <IndicatorRow>
          <Chip $width={186}>
            <Text $size={36}>资金趋势</Text>
            <Caret />
          </Chip>
          <Readings $gap={13} $left={2}>
            <Reading $width={94}>
              <Narrow $size={36} $scale={0.66} $room={78}>
                -1.17亿
              </Narrow>
              <Arrow color="#2b2b2b" height={34} />
            </Reading>
            <Reading $width={144}>
              <Narrow $size={36} $scale={0.65} $room={124} $color="#edc21c">
                MA1:-600万
              </Narrow>
              <Arrow color="#edc21c" height={34} />
            </Reading>
            <Reading $width={156}>
              <Narrow $size={36} $scale={0.65} $room={137} $color="#cf2ccf">
                MA2:-7265万
              </Narrow>
              <Arrow color="#cf2ccf" down height={34} />
            </Reading>
          </Readings>
        </IndicatorRow>
        <FlowChart />
        <TimeAxis />
      </ChartColumn>

      <ChipColumn>
        <ChipChart />
        <Legend>
          <Square $color="#5ab947" />
          <Text $size={29} $color="#666">
            套牢
          </Text>
          <LegendGap />
          <Square $color="#ee4848" />
          <Text $size={29} $color="#666">
            获利
          </Text>
        </Legend>
        <Stat label="获利比例" value="55.67%" />
        <Stat label="平均成本" value="3.12" />
        <Toggle>
          <ToggleItem $active>90%筹码</ToggleItem>
          <ToggleItem>70%筹码</ToggleItem>
        </Toggle>
        <Stat label="价格区间" value="1.64-3.50" />
        <Stat label="集中度" value="36.19%" />
        <Stat label="说明" value="2025-11-07" info />
      </ChipColumn>
    </Body>

    <Banner>
      <Svg width="47" height="40" viewBox="0 0 47 40">
        <path d="M2 12V28" stroke={ORANGE} strokeWidth="3" />
        <path d="M9 12L24 9L46 0V40L32 33L30 38L18 34L16 29L9 27Z" fill={ORANGE} />
      </Svg>
      <BannerText $size={38.9} $color="#dc5a10">
        边看行情边下单，立即开户把握瞬时机遇&gt;&gt;
      </BannerText>
      <Spacer />
      <BannerDivider />
      <Svg width="33" height="32" viewBox="0 0 33 32">
        <path d="M2 1L31 31M31 1L2 31" stroke={ORANGE} strokeWidth="3.200" />
      </Svg>
    </Banner>
    <Divider />

    <BottomNav>
      <IndexBox>
        <CaretUp />
        <IndexValue $size={38.5} $color={GREEN}>
          3997.56
        </IndexValue>
        <IndexRow>
          <Text $size={35} $color="#666">
            上证
          </Text>
          <Text $size={36} $color={GREEN}>
            -0.25%
          </Text>
        </IndexRow>
      </IndexBox>
      {navItems.map(({ label, icon }) => (
        <NavItem key={label}>
          <Svg width="64" height="60" viewBox="-2 0 64 60" fill="none" stroke="#666" strokeWidth="3">
            {icon}
          </Svg>
          <Text $size={35} $color="#666">
            {label}
          </Text>
        </NavItem>
      ))}
    </BottomNav>

    <SystemNav>
      <Svg width="36" height="36" viewBox="0 0 36 36">
        <path d="M0 2H36M0 18H36M0 34H36" stroke="#858585" strokeWidth="2" />
      </Svg>
      <Svg width="36" height="36" viewBox="0 0 36 36">
        <rect x="1" y="1" width="34" height="34" rx="7" fill="none" stroke="#777" strokeWidth="2" />
      </Svg>
      <Svg width="36" height="36" viewBox="0 0 36 36">
        <path d="M33 1Q34 1 34 3V33Q34 35 32 34L2 19Q1 18 2 17L32 1Z" fill="none" stroke="#777" strokeWidth="2" />
      </Svg>
    </SystemNav>

    <Scribble width="1080" height="2400" viewBox="0 0 1080 2400">
      <path
        d={smooth(trendPoints)}
        fill="none"
        stroke="#ff0000"
        strokeWidth="14.500"
        strokeLinecap="round"
        strokeLinejoin="round"
      />
    </Scribble>
  </Screen>
)

export default App
